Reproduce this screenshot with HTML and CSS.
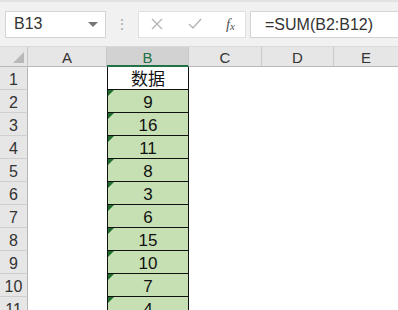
FILE: index.html
```html
<!DOCTYPE html>
<html lang="zh-CN">
<head>
    <meta charset="UTF-8">
    <title>Sheet</title>
    <link rel="stylesheet" href="styles.css">
</head>
<body>
    <!-- Formula bar -->
    <div class="toolbar">
        <div class="name-box">
            <span>B13</span>
            <span class="caret"></span>
        </div>
        <div class="grip">⋮</div>
        <div class="fx-buttons">
            <svg width="14" height="14" viewBox="0 0 14 14"><path d="M2 2 L12 12 M12 2 L2 12" stroke="#b5b5b5" stroke-width="1.4" fill="none"/></svg>
            <svg width="16" height="14" viewBox="0 0 16 14"><path d="M2 7 L6 11 L14 2" stroke="#b5b5b5" stroke-width="1.4" fill="none"/></svg>
            <span class="fx">f<sub>x</sub></span>
        </div>
        <div class="formula">=SUM(B2:B12)</div>
    </div>

    <!-- Grid -->
    <div class="sheet">
        <div class="corner"><span class="tri"></span></div>
        <div class="col-head">A</div>
        <div class="col-head active">B</div>
        <div class="col-head">C</div>
        <div class="col-head">D</div>
        <div class="col-head last">E</div>

        <div class="row-head">1</div><div class="cell"></div><div class="cell b title">数据</div><div class="cell"></div><div class="cell"></div><div class="cell"></div>
        <div class="row-head">2</div><div class="cell"></div><div class="cell b num">9</div><div class="cell"></div><div class="cell"></div><div class="cell"></div>
        <div class="row-head">3</div><div class="cell"></div><div class="cell b num">16</div><div class="cell"></div><div class="cell"></div><div class="cell"></div>
        <div class="row-head">4</div><div class="cell"></div><div class="cell b num">11</div><div class="cell"></div><div class="cell"></div><div class="cell"></div>
        <div class="row-head">5</div><div class="cell"></div><div class="cell b num">8</div><div class="cell"></div><div class="cell"></div><div class="cell"></div>
        <div class="row-head">6</div><div class="cell"></div><div class="cell b num">3</div><div class="cell"></div><div class="cell"></div><div class="cell"></div>
        <div class="row-head">7</div><div class="cell"></div><div class="cell b num">6</div><div class="cell"></div><div class="cell"></div><div class="cell"></div>
        <div class="row-head">8</div><div class="cell"></div><div class="cell b num">15</div><div class="cell"></div><div class="cell"></div><div class="cell"></div>
        <div class="row-head">9</div><div class="cell"></div><div class="cell b num">10</div><div class="cell"></div><div class="cell"></div><div class="cell"></div>
        <div class="row-head">10</div><div class="cell"></div><div class="cell b num">7</div><div class="cell"></div><div class="cell"></div><div class="cell"></div>
        <div class="row-head">11</div><div class="cell"></div><div class="cell b num">4</div><div class="cell"></div><div class="cell"></div><div class="cell"></div>
    </div>
</body>
</html>
```

FILE: styles.css
```css
body {
    margin: 0;
    padding: 0;
    width: 398px;
    height: 310px;
    overflow: hidden;
    background: #fff;
    font-family: "Liberation Sans", Arial, "Noto Sans CJK SC", sans-serif;
    color: #222;
}

/* ---- formula bar ---- */
.toolbar {
    height: 47px;
    background: #f1f1f1;
    border-top: 2px solid #e2e2e2;
    border-bottom: 1px solid #dadada;
    box-sizing: border-box;
    display: flex;
    align-items: center;
    padding: 0 0 0 5px;
}

.name-box {
    width: 101px;
    height: 27px;
    box-sizing: border-box;
    background: #fff;
    border: 1px solid #d4d4d4;
    display: flex;
    align-items: center;
    justify-content: space-between;
    padding: 0 7px 0 8px;
    font-size: 16px;
    color: #333;
}

.caret {
    width: 0;
    height: 0;
    border-left: 5px solid transparent;
    border-right: 5px solid transparent;
    border-top: 5px solid #777;
}

.grip {
    width: 32px;
    text-align: center;
    color: #aaa;
    font-size: 14px;
}

.fx-buttons {
    width: 108px;
    height: 27px;
    box-sizing: border-box;
    background: #fff;
    border: 1px solid #e0e0e0;
    display: flex;
    align-items: center;
    justify-content: space-between;
    padding: 0 10px 0 11px;
}

.fx {
    font-family: "Liberation Serif", serif;
    font-style: italic;
    font-size: 15px;
    color: #555;
}

.fx sub {
    font-size: 11px;
    vertical-align: -1px;
}

.formula {
    flex: 1;
    margin-left: 4px;
    height: 27px;
    box-sizing: border-box;
    background: #fff;
    border: 1px solid #d4d4d4;
    border-right: none;
    padding: 0 0 0 14px;
    font-size: 16px;
    line-height: 25px;
    color: #333;
}

/* ---- sheet ---- */
.sheet {
    display: grid;
    grid-template-columns: 28px 79px 82px 73px 72px 1fr;
    grid-template-rows: 20px repeat(11, 23px);
}

.corner {
    background: #e6e6e6;
    border-right: 1px solid #c6c6c6;
    border-bottom: 1px solid #b8b8b8;
    position: relative;
}

.tri {
    position: absolute;
    right: 3px;
    bottom: 3px;
    width: 0;
    height: 0;
    border-left: 11px solid transparent;
    border-bottom: 11px solid #b9b9b9;
}

.col-head {
    background: #e6e6e6;
    border-right: 1px solid #c9c9c9;
    border-bottom: 1px solid #b8b8b8;
    text-align: center;
    font-size: 15px;
    line-height: 22px;
    color: #333;
}

.col-head.active {
    background: #d2d2d2;
    color: #217346;
    border-bottom: 2px solid #217346;
}

.col-head.last {
    border-right: none;
}

.row-head {
    background: #e6e6e6;
    border-right: 1px solid #b8b8b8;
    border-bottom: 1px solid #cfcfcf;
    text-align: center;
    font-size: 16px;
    line-height: 26px;
    color: #333;
}

.cell {
    background: #fff;
}

.cell.b {
    border-left: 1px solid #111;
    border-right: 1px solid #111;
    border-bottom: 1px solid #111;
    text-align: center;
    font-size: 17px;
    line-height: 25px;
    color: #111;
}

.cell.num {
    background: #c6e0b4;
    position: relative;
}

.cell.num::before {
    content: "";
    position: absolute;
    left: 0;
    top: 0;
    border-right: 6px solid transparent;
    border-top: 6px solid #1f6e2d;
}

.title {
    font-size: 16px;
}
```
